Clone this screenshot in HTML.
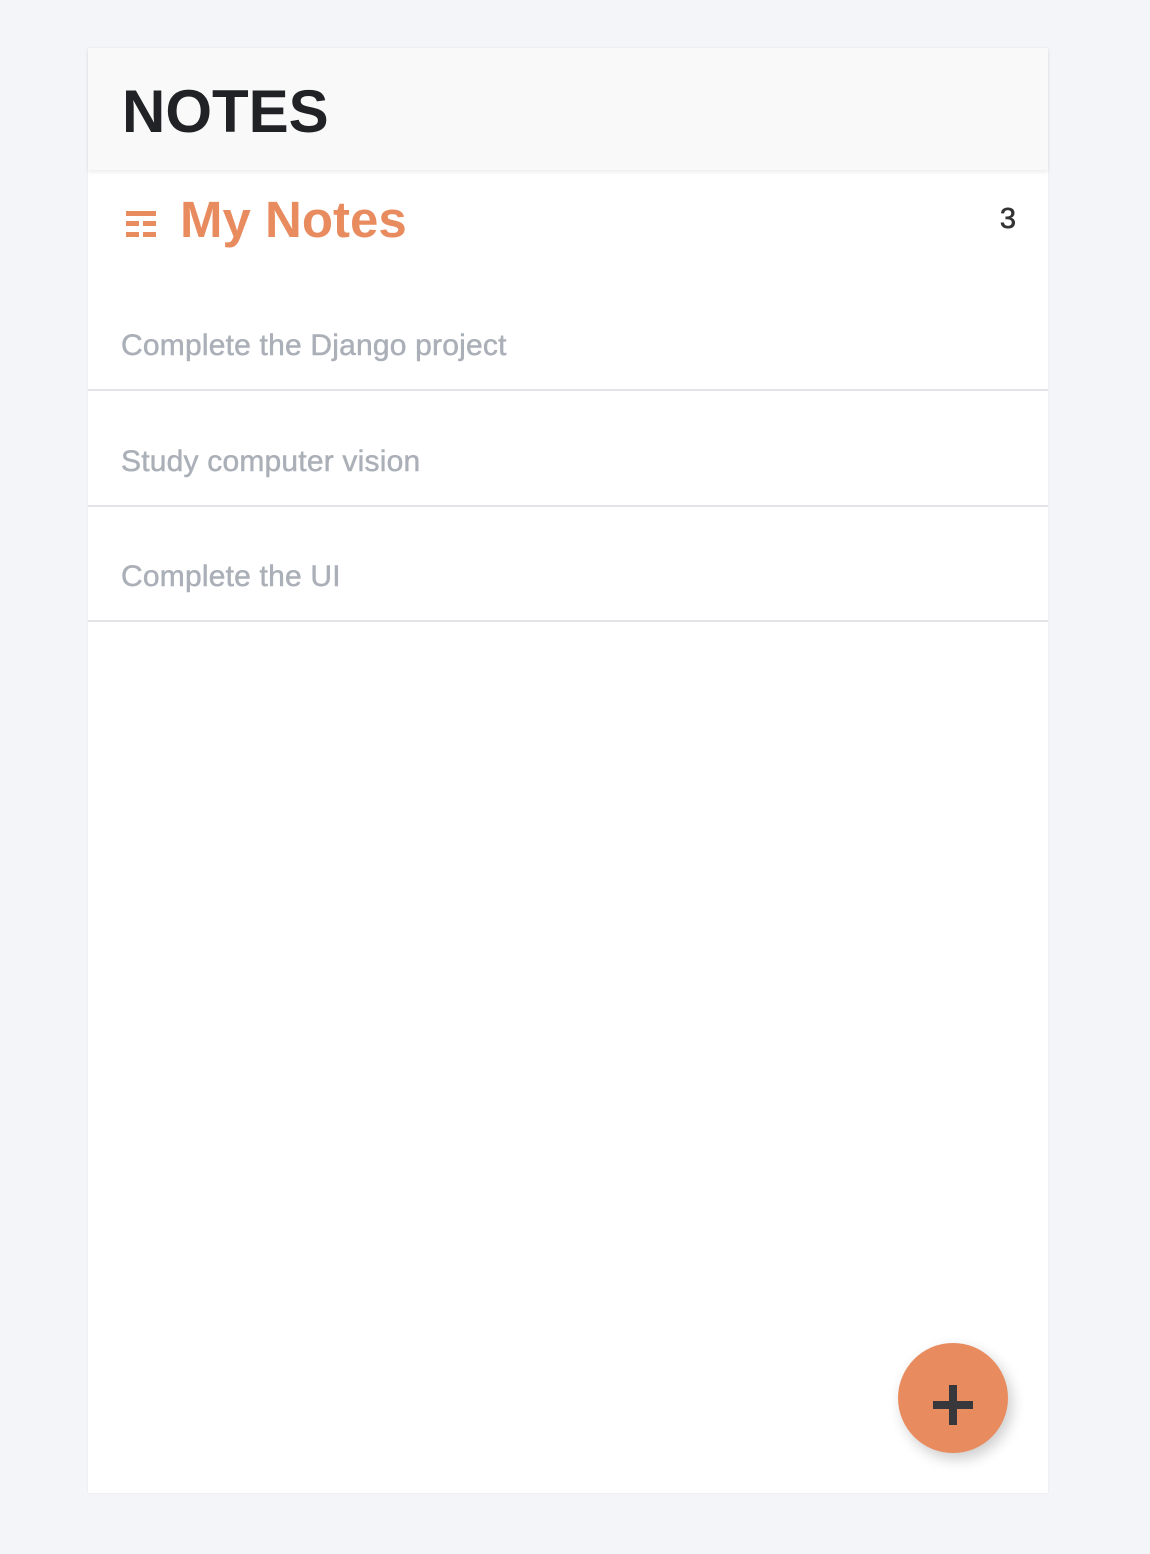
<!DOCTYPE html>
<html><head><meta charset="utf-8"><style>
html,body{margin:0;padding:0;}
body{width:1150px;height:1554px;background:#f4f5f9;position:relative;font-family:"Liberation Sans",sans-serif;overflow:hidden;}
.card{position:absolute;left:88px;top:48px;width:960px;height:1445px;background:#fff;box-shadow:0 0 3px rgba(0,0,0,0.05);}
.head{height:122px;background:#f9f9f9;box-shadow:0 2px 4px rgba(0,0,0,0.08);position:relative;}
.head h1{margin:0;position:absolute;left:34px;top:31px;font-size:60px;font-weight:bold;color:#212226;line-height:66px;}
.title{position:absolute;left:92px;top:142px;font-size:51px;font-weight:bold;color:#e88c5f;line-height:60px;}
.count{position:absolute;right:32px;top:155px;font-size:29px;color:#333;-webkit-text-stroke:0.6px #333;}
.icon{position:absolute;left:38px;top:163px;}
.item{position:absolute;left:0;width:960px;border-bottom:2px solid #e1e3e7;}
.item span{position:absolute;left:33px;font-size:30px;color:#abb0b8;-webkit-text-stroke:0.5px #abb0b8;letter-spacing:0.2px;}
.fab{position:absolute;left:810px;top:1295px;width:110px;height:110px;border-radius:50%;background:#e88c5f;box-shadow:4px 6px 14px rgba(0,0,0,0.2);}
.fab:before{content:"";position:absolute;left:35px;top:58px;width:40px;height:8px;background:#37373c;}
.fab:after{content:"";position:absolute;left:51px;top:42px;width:8px;height:40px;background:#37373c;}
</style></head><body>
<div class="card">
  <div class="head"><h1>NOTES</h1></div>
  <svg class="icon" width="32" height="28" viewBox="0 0 32 28">
    <g fill="#e88c5f">
      <rect x="0" y="0" width="30" height="5"/>
      <rect x="0" y="10" width="13" height="5"/><rect x="17" y="10" width="13" height="5"/>
      <rect x="0" y="21" width="13" height="5"/><rect x="17" y="21" width="13" height="5"/>
    </g>
  </svg>
  <div class="title">My Notes</div>
  <div class="count">3</div>
  <div class="item" style="top:227px;height:114px;"><span style="top:54px;">Complete the Django project</span></div>
  <div class="item" style="top:343px;height:114px;"><span style="top:54px;">Study computer vision</span></div>
  <div class="item" style="top:459px;height:113px;"><span style="top:53px;">Complete the UI</span></div>
  <div class="fab"></div>
</div>
</body></html>
